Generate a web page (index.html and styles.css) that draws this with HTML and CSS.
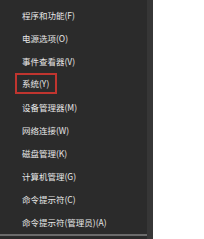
FILE: index.html
```html
<!DOCTYPE html>
<html lang="zh-CN">
<head>
    <meta charset="UTF-8">
    <title>快速链接菜单</title>
    <link rel="stylesheet" href="styles.css">
</head>
<body>
    <div class="menu">
        <div class="item">程序和功能(F)</div>
        <div class="item">电源选项(O)</div>
        <div class="item">事件查看器(V)</div>
        <div class="item"><span class="mark">系统(Y)</span></div>
        <div class="item">设备管理器(M)</div>
        <div class="item">网络连接(W)</div>
        <div class="item">磁盘管理(K)</div>
        <div class="item">计算机管理(G)</div>
        <div class="item">命令提示符(C)</div>
        <div class="item">命令提示符(管理员)(A)</div>
        <div class="sep"></div>
    </div>
</body>
</html>
```

FILE: styles.css
```css
body {
    margin: 0;
    background: white;
    font-family: "Noto Sans CJK SC", "Noto Sans", sans-serif;
}
.menu {
    width: 153px;
    height: 239px;
    box-sizing: border-box;
    padding-top: 3px;
    background: #2b2b2b;
    border-right: 6px solid #363636;
    display: flex;
    flex-direction: column;
}
.item {
    height: 23px;
    padding-left: 22px;
    display: flex;
    align-items: center;
    color: #e8e8e8;
    font-size: 8.5px;
    white-space: nowrap;
}
.mark {
    margin-left: -7px;
    padding: 0 6px 0 5px;
    height: 17px;
    line-height: 17px;
    border: 2px solid #c0352f;
}
.sep {
    height: 2px;
    margin-top: 1px;
    background: #6b6b6b;
}
```
